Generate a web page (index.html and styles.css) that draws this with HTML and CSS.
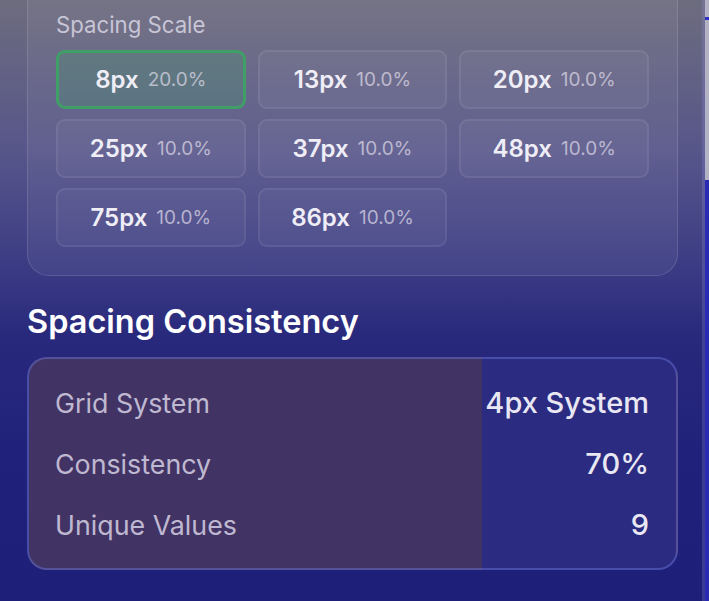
FILE: index.html
```html
<!DOCTYPE html>
<html lang="en">
<head>
<meta charset="utf-8">
<title>Spacing</title>
<link rel="stylesheet" href="styles.css">
</head>
<body>
<div class="page">
  <main class="main">
    <section class="scale-card">
      <div class="scale-label">Spacing Scale</div>
      <div class="chips">
        <div class="chip chip-active"><span class="chip-val">8px</span><span class="chip-pct">20.0%</span></div>
        <div class="chip"><span class="chip-val">13px</span><span class="chip-pct">10.0%</span></div>
        <div class="chip"><span class="chip-val">20px</span><span class="chip-pct">10.0%</span></div>
        <div class="chip"><span class="chip-val">25px</span><span class="chip-pct">10.0%</span></div>
        <div class="chip"><span class="chip-val">37px</span><span class="chip-pct">10.0%</span></div>
        <div class="chip"><span class="chip-val">48px</span><span class="chip-pct">10.0%</span></div>
        <div class="chip"><span class="chip-val">75px</span><span class="chip-pct">10.0%</span></div>
        <div class="chip"><span class="chip-val">86px</span><span class="chip-pct">10.0%</span></div>
      </div>
    </section>
    <h2 class="section-title">Spacing Consistency</h2>
    <section class="consistency-card" style="--fill: 70%">
      <div class="row"><span class="row-label">Grid System</span><span class="row-val">4px System</span></div>
      <div class="row"><span class="row-label">Consistency</span><span class="row-val">70%</span></div>
      <div class="row"><span class="row-label">Unique Values</span><span class="row-val">9</span></div>
    </section>
  </main>
  <div class="edge-line"></div>
  <div class="edge-bar"><div class="edge-thumb"><div class="edge-tick"></div></div></div>
</div>
</body>
</html>
```

FILE: styles.css
```css
html, body {
  margin: 0;
  padding: 0;
  height: 100%;
}

body {
  font-family: "Inter", "Noto Sans", sans-serif;
  background: linear-gradient(180deg, #6d6c7e 0%, #57568a 25%, #3a3a84 45%, #28297c 56%, #20217a 75%, #1e1f78 100%);
  color: #ffffff;
  overflow: hidden;
}

.page {
  display: flex;
  height: 601px;
}

.main {
  flex: 1;
  padding: 0 24px 0 27px;
  display: flex;
  flex-direction: column;
}

.scale-card {
  border: 1px solid rgba(255, 255, 255, 0.12);
  border-top: none;
  border-radius: 0 0 22px 22px;
  background: rgba(255, 255, 255, 0.055);
  padding: 10px 28px 28px 28px;
}

.scale-label {
  font-size: 22.2px;
  line-height: 30px;
  color: rgba(235, 232, 245, 0.72);
  margin-bottom: 10px;
}

.chips {
  display: grid;
  grid-template-columns: repeat(3, 1fr);
  column-gap: 12px;
  row-gap: 10px;
}

.chip {
  height: 59px;
  box-sizing: border-box;
  border: 2px solid rgba(255, 255, 255, 0.07);
  border-radius: 9px;
  background: rgba(255, 255, 255, 0.04);
  display: flex;
  align-items: center;
  justify-content: center;
  gap: 9px;
}

.chip-active {
  border: 3px solid #3f9f66;
  background: rgba(60, 170, 100, 0.22);
}

.chip-val {
  font-size: 24px;
  font-weight: 600;
  color: #efedf6;
}

.chip-pct {
  font-size: 19px;
  color: rgba(225, 222, 235, 0.7);
}

.section-title {
  margin: 26px 0 0 0;
  font-size: 32.5px;
  line-height: 40px;
  font-weight: 600;
  color: #ffffff;
  height: 55px;
}

.consistency-card {
  border: 2px solid rgba(110, 118, 220, 0.45);
  border-radius: 20px;
  background: linear-gradient(90deg, #413465 var(--fill), #2b2c81 var(--fill));
  padding: 13px 27px 13px 26px;
}

.row {
  height: 61px;
  display: flex;
  align-items: center;
  justify-content: space-between;
}

.row-label {
  font-size: 26.8px;
  color: rgba(225, 222, 238, 0.8);
}

.row-val {
  font-size: 29px;
  font-weight: 500;
  color: #e9e7f3;
}

.edge-line {
  width: 3px;
  background: rgba(140, 140, 220, 0.25);
}

.edge-bar {
  width: 4px;
  background: #2a2bb4;
  display: flex;
  flex-direction: column;
}

.edge-thumb {
  height: 180px;
  background: #b3b2c4;
  padding-top: 17px;
  box-sizing: border-box;
}

.edge-tick {
  height: 3px;
  background: #2d30c0;
}
```
